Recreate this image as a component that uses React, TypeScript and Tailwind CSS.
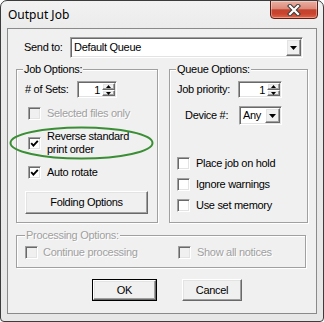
import React from "react";

const sunken =
  "border border-t-[#a0a0a0] border-l-[#a0a0a0] border-b-white border-r-white shadow-[inset_1px_1px_0_#696969,inset_-1px_-1px_0_#e3e3e3]";
const raised =
  "border border-t-white border-l-white border-b-[#696969] border-r-[#696969] shadow-[inset_-1px_-1px_0_#a0a0a0,inset_1px_1px_0_#e3e3e3] bg-[#f0f0f0]";

function Box({ checked, disabled }: { checked?: boolean; disabled?: boolean }) {
  return (
    <div
      className={`w-[13px] h-[13px] shrink-0 flex items-center justify-center ${sunken} ${
        disabled ? "bg-[#f0f0f0]" : "bg-white"
      }`}
    >
      {checked && (
        <svg width="9" height="9" viewBox="0 0 9 9">
          <path d="M1.2 4.2 L3.4 6.6 L7.8 1.8" stroke="black" strokeWidth="1.9" fill="none" />
        </svg>
      )}
    </div>
  );
}

function Check({
  label,
  checked,
  disabled,
  className = "",
  gap = "gap-[6px]",
}: {
  label: React.ReactNode;
  checked?: boolean;
  disabled?: boolean;
  className?: string;
  gap?: string;
}) {
  return (
    <div className={`flex items-center ${gap} ${className}`}>
      <Box checked={checked} disabled={disabled} />
      <span
        className={`leading-[13px] whitespace-nowrap ${
          disabled ? "text-[#a0a0a0] [text-shadow:1px_1px_0_#ffffff]" : "text-black"
        }`}
      >
        {label}
      </span>
    </div>
  );
}

function Arrow({ up, size = 7 }: { up?: boolean; size?: number }) {
  const h = Math.ceil(size / 2);
  return (
    <svg width={size} height={h} viewBox={`0 0 ${size} ${h}`}>
      <polygon
        points={up ? `0,${h} ${size},${h} ${size / 2},0` : `0,0 ${size},0 ${size / 2},${h}`}
        fill="black"
      />
    </svg>
  );
}

function Spin({ width, value }: { width: string; value: string }) {
  return (
    <div className={`flex h-[17px] ${width} ${sunken} bg-white p-px`}>
      <div className="flex-1 text-right pr-[2px] leading-[14px]">{value}</div>
      <div className="flex flex-col w-[13px]">
        <div className={`h-[7px] flex items-center justify-center ${raised}`}>
          <Arrow up size={5} />
        </div>
        <div className={`h-[6px] flex items-center justify-center ${raised}`}>
          <Arrow size={5} />
        </div>
      </div>
    </div>
  );
}

function Combo({ width, height, text }: { width: string; height: string; text: string }) {
  return (
    <div className={`flex ${width} ${height} ${sunken} bg-white p-px`}>
      <div className="flex-1 pl-[2px] flex items-center leading-[13px] whitespace-nowrap overflow-hidden">
        {text}
      </div>
      <div className={`w-[15px] flex items-center justify-center ${raised}`}>
        <Arrow size={7} />
      </div>
    </div>
  );
}

function Group({
  label,
  width,
  height,
  labelLeft,
  disabled,
  children,
}: {
  label: string;
  width: string;
  height: string;
  labelLeft: string;
  disabled?: boolean;
  children: React.ReactNode;
}) {
  return (
    <div
      className={`relative ${width} ${height} border border-[#a0a0a0] shadow-[inset_1px_1px_0_#ffffff,1px_1px_0_#ffffff]`}
    >
      <span
        className={`absolute -top-[7px] ${labelLeft} px-px bg-[#f0f0f0] leading-[13px] whitespace-nowrap ${
          disabled ? "text-[#a0a0a0] [text-shadow:1px_1px_0_#ffffff]" : "text-black"
        }`}
      >
        {label}
      </span>
      {children}
    </div>
  );
}

function Button({ width, label, isDefault }: { width: string; label: string; isDefault?: boolean }) {
  if (isDefault) {
    return (
      <div className={`${width} h-[22px] border border-black flex`}>
        <div className={`flex-1 flex items-center justify-center leading-[13px] ${raised}`}>{label}</div>
      </div>
    );
  }
  return (
    <div className={`${width} h-[22px] flex items-center justify-center leading-[13px] ${raised}`}>
      {label}
    </div>
  );
}

export default function App() {
  return (
    <div className="relative w-[324px] h-[322px] bg-[linear-gradient(180deg,#f2f2f3_0px,#ebebec_28px,#e7e7e8_100%)] border border-[#3c3c3c] rounded-t-[7px] rounded-b-[4px] overflow-hidden text-[11px] tracking-[-0.3px] text-black font-['Liberation_Sans',Arial,sans-serif]">
      {/* title bar */}
      <div className="flex justify-between h-[27px]">
        <div className="pl-[7px] pt-[6px] text-[12px] leading-[16px] tracking-normal text-black font-['Noto_Sans',sans-serif]">
          Output Job
        </div>
        <div className="-mt-px mr-[5px] w-[48px] h-[19px] rounded-b-[4px] border border-[#5e1d14] bg-[linear-gradient(180deg,#ebb0a3_0%,#dc8a7a_45%,#c3442f_52%,#c9432e_75%,#e0664a_100%)] shadow-[inset_0_0_0_1px_rgba(255,255,255,0.35)] flex items-center justify-center">
          <svg width="14" height="12" viewBox="0 0 14 12">
            <path d="M3 2 L11 10 M11 2 L3 10" stroke="#3b3b3b" strokeWidth="4.2" strokeLinecap="square" />
            <path d="M3 2 L11 10 M11 2 L3 10" stroke="#ffffff" strokeWidth="2.2" strokeLinecap="square" />
          </svg>
        </div>
      </div>

      {/* client area */}
      <div className="ml-[6px] w-[310px] h-[286px] border border-[#8a8a8a] bg-[#f0f0f0]">
        {/* Send to */}
        <div className="pt-[8px] pl-[16px] flex items-center">
          <span className="w-[46px] leading-[13px]">Send to:</span>
          <Combo width="w-[233px]" height="h-[21px]" text="Default Queue" />
        </div>

        {/* groups */}
        <div className="flex mt-[11px] pl-[8px] gap-[11px]">
          <Group label="Job Options:" width="w-[142px]" height="h-[154px]" labelLeft="left-[6px]">
            <div className="flex flex-col">
              <div className="mt-[11px] pl-[8px] flex items-center">
                <span className="w-[52px] leading-[13px]">#&nbsp;of Sets:</span>
                <Spin width="w-[40px]" value="1" />
              </div>
              <Check className="mt-[9px] pl-[11px]" label="Selected files only" disabled />
              <Check
                className="mt-[10px] pl-[11px]"
                label={
                  <>
                    Reverse standard
                    <br />
                    print order
                  </>
                }
                checked
              />
              <Check className="mt-[10px] pl-[11px]" label="Auto rotate" checked />
              <div className="mt-[12px] ml-[8px] w-[123px]">
                <div className={`h-[23px] flex items-center justify-center leading-[13px] ${raised}`}>
                  Folding Options
                </div>
              </div>
            </div>
          </Group>

          <Group label="Queue Options:" width="w-[139px]" height="h-[154px]" labelLeft="left-[6px]">
            <div className="flex flex-col">
              <div className="mt-[11px] pl-[7px] flex items-center">
                <span className="w-[61px] leading-[13px]">Job priority:</span>
                <Spin width="w-[44px]" value="1" />
              </div>
              <div className="mt-[8px] pl-[15px] flex items-center">
                <span className="w-[54px] leading-[13px]">Device #:</span>
                <Combo width="w-[43px]" height="h-[19px]" text="Any" />
              </div>
              <Check className="mt-[32px] pl-[7px]" label="Place job on hold" />
              <Check className="mt-[8px] pl-[7px]" label="Ignore warnings" />
              <Check className="mt-[8px] pl-[7px]" label="Use set memory" />
            </div>
          </Group>
        </div>

        {/* processing */}
        <div className="mt-[12px] pl-[8px]">
          <Group
            label="Processing Options:"
            width="w-[290px]"
            height="h-[33px]"
            labelLeft="left-[8px]"
            disabled
          >
            <div className="mt-[10px] pl-[8px] flex items-center">
              <Check className="w-[153px]" gap="gap-[5px]" label="Continue processing" disabled />
              <Check label="Show all notices" disabled />
            </div>
          </Group>
        </div>

        {/* buttons */}
        <div className="mt-[11px] pl-[84px] flex gap-[25px]">
          <Button width="w-[65px]" label="OK" isDefault />
          <Button width="w-[60px]" label="Cancel" />
        </div>
      </div>

      {/* annotation ellipse */}
      <svg
        className="absolute left-[8px] top-[125px] pointer-events-none"
        width="145"
        height="34"
        viewBox="0 0 145 34"
      >
        <ellipse cx="72.5" cy="17" rx="71" ry="15.5" fill="none" stroke="#3a8f35" strokeWidth="2" />
      </svg>
    </div>
  );
}
